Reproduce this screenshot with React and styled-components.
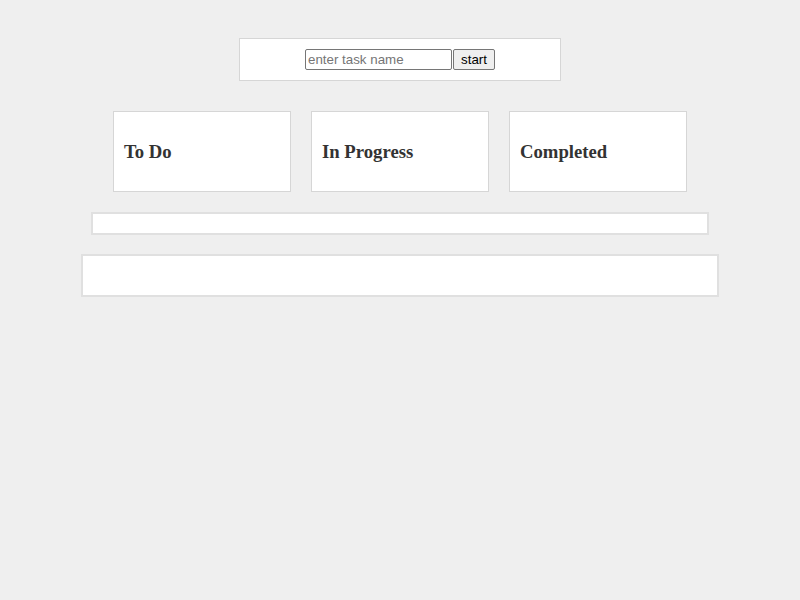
import React from "react";
import styled, { createGlobalStyle } from "styled-components";

const GlobalStyle = createGlobalStyle`
  body {
    margin: 0;
    background: #efefef;
    font-family: "Liberation Serif", serif;
  }
`;

const Page = styled.div`
  display: flex;
  flex-direction: column;
  align-items: center;
  padding-top: 38px;
`;

const StartBar = styled.form`
  box-sizing: border-box;
  width: 322px;
  height: 43px;
  padding: 10px;
  background: #fff;
  border: 1px solid #d6d6d6;
  display: flex;
  justify-content: center;
  align-items: center;
`;

const TaskInput = styled.input`
  box-sizing: border-box;
  width: 147px;
  height: 21px;
  margin: 0;
  padding: 1px 2px;
  font-family: "Liberation Sans", Arial, sans-serif;
  font-size: 13.33px;
  border: 1px solid #767676;
  border-radius: 2px;
  &::placeholder {
    color: #757575;
  }
`;

const StartButton = styled.button`
  box-sizing: border-box;
  width: 42px;
  height: 21px;
  margin: 0 0 0 1px;
  padding: 1px 6px;
  font-family: "Liberation Sans", Arial, sans-serif;
  font-size: 13.33px;
  color: #000;
  background: #efefef;
  border: 1px solid #767676;
  border-radius: 2px;
`;

const Columns = styled.div`
  display: flex;
  gap: 20px;
  margin-top: 30px;
`;

const Column = styled.div`
  box-sizing: border-box;
  width: 178px;
  height: 81px;
  padding: 10px;
  background: #fff;
  border: 1px solid #d6d6d6;
  display: flex;
  align-items: center;
`;

const ColumnTitle = styled.h3`
  margin: 0;
  font-size: 18.72px;
  font-weight: bold;
  color: #333;
`;

const Strip = styled.div`
  box-sizing: border-box;
  width: ${(p) => p.$width}px;
  height: ${(p) => p.$height}px;
  margin-top: ${(p) => p.$top}px;
  background: #fff;
  border: 2px solid #e0e0e0;
`;

const columns = ["To Do", "In Progress", "Completed"];

const App = () => {
  return (
    <>
      <GlobalStyle />
      <Page>
        <StartBar onSubmit={(e) => e.preventDefault()}>
          <TaskInput placeholder="enter task name" />
          <StartButton type="submit">start</StartButton>
        </StartBar>
        <Columns>
          {columns.map((name) => (
            <Column key={name}>
              <ColumnTitle>{name}</ColumnTitle>
            </Column>
          ))}
        </Columns>
        <Strip $width={618} $height={23} $top={20} />
        <Strip $width={638} $height={43} $top={19} />
      </Page>
    </>
  );
};

export default App;
